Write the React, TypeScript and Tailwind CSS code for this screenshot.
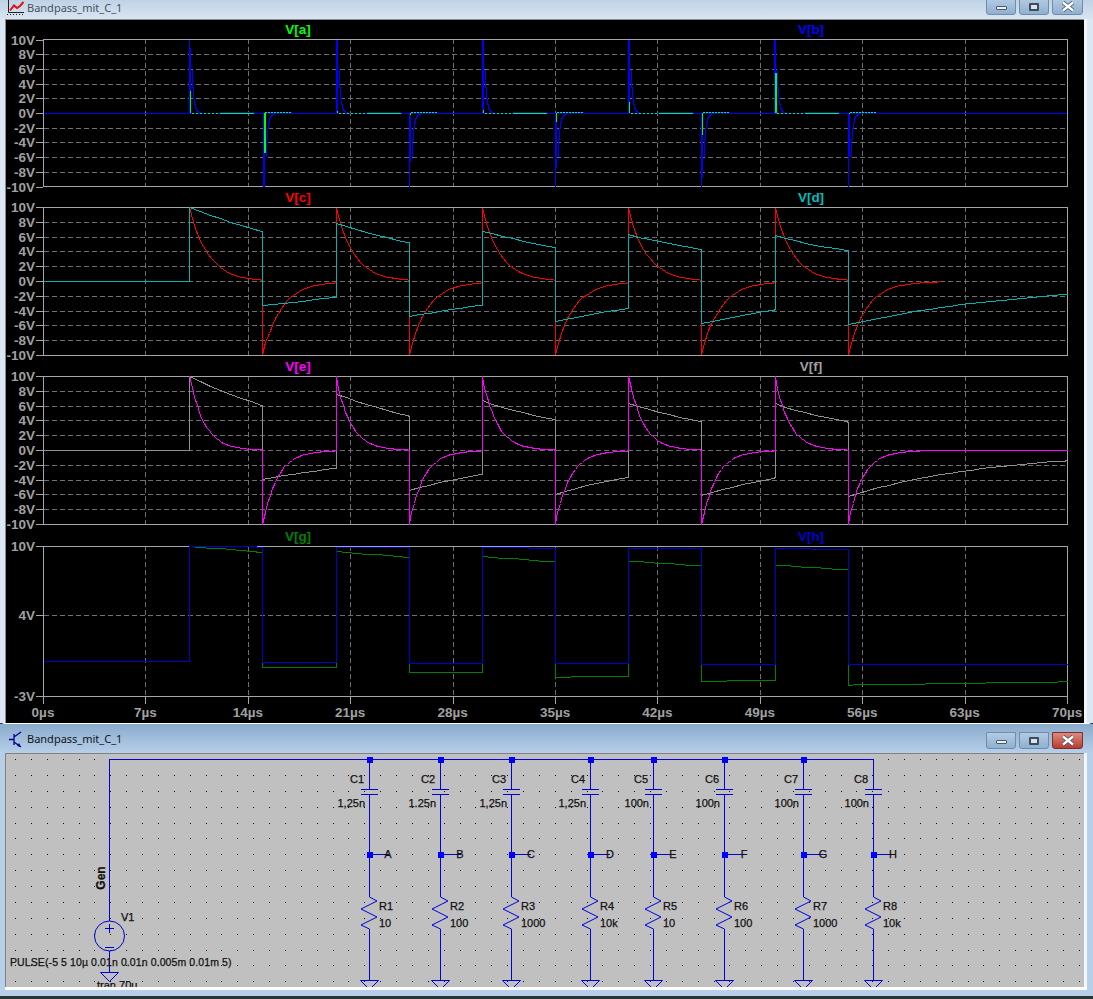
import type { ReactNode } from "react";

const EDGES = [10, 15, 20, 25, 30, 35, 40, 45, 50, 55];
const TICKS_X = [0, 7, 14, 21, 28, 35, 42, 49, 56, 63, 70];
const tx = (t: number) => 43 + t * 14.63;

// RC high pass answer to the pulse train, as pixel rounded points
function wave(tau: number, yOf: (v: number) => number, end = 70, lead = true) {
  const pts: string[] = [];
  const add = (t: number, v: number) => pts.push(`${Math.round(tx(t)) + 0.5},${Math.round(yOf(v)) + 0.5}`);
  if (lead) {
    add(0, 0);
    add(10, 0);
  }
  let v = 0;
  EDGES.forEach((e, i) => {
    v += i % 2 === 0 ? 10 : -10;
    const next = Math.min(i < 9 ? EDGES[i + 1] : 70, end);
    const dt = Math.max(0.14, Math.min(tau / 6, 0.7));
    let t = e;
    add(e, v);
    while (t < next) {
      t = Math.min(t + dt, next);
      add(t, v * Math.exp(-(t - e) / tau));
    }
    v = v * Math.exp(-(next - e) / tau);
  });
  return pts.join(" ");
}

function Trace({ points, color }: { points: string; color: string }) {
  return <polyline points={points} fill="none" stroke={color} strokeWidth={1} shapeRendering="crispEdges" />;
}

type PaneProps = {
  top: number;
  bottom: number;
  viewTop: number;
  viewBottom: number;
  yTicks: { label: string; y: number; grid: boolean }[];
  left: { label: string; color: string };
  right: { label: string; color: string };
  xAxis?: boolean;
  children: ReactNode;
};

function Pane({ top, bottom, viewTop, viewBottom, yTicks, left, right, xAxis, children }: PaneProps) {
  return (
    <svg
      width={1078}
      height={viewBottom - viewTop}
      viewBox={`6 ${viewTop} 1078 ${viewBottom - viewTop}`}
      className="block overflow-visible font-['Liberation_Sans'] font-bold text-[13.5px]"
    >
      <text x={298} y={top - 5} textAnchor="middle" fill={left.color}>{left.label}</text>
      <text x={811} y={top - 5} textAnchor="middle" fill={right.color}>{right.label}</text>
      {TICKS_X.slice(1, -1).map((t) => (
        <line key={t} x1={Math.round(tx(t)) + 0.5} x2={Math.round(tx(t)) + 0.5} y1={top} y2={bottom} stroke="#6e6e6e" strokeDasharray="5 3" shapeRendering="crispEdges" />
      ))}
      {yTicks.map((k) => (
        <g key={k.label}>
          {k.grid && <line x1={44} x2={1067} y1={k.y + 0.5} y2={k.y + 0.5} stroke="#6e6e6e" strokeDasharray="5 3" shapeRendering="crispEdges" />}
          <line x1={36} x2={43} y1={k.y + 0.5} y2={k.y + 0.5} stroke="#a6a6a6" shapeRendering="crispEdges" />
          <text x={35} y={k.y + 5} textAnchor="end" fill="#a0a0a0">{k.label}</text>
        </g>
      ))}
      <rect x={43.5} y={top + 0.5} width={1024} height={bottom - top} fill="none" stroke="#a6a6a6" shapeRendering="crispEdges" />
      {children}
      {xAxis &&
        TICKS_X.map((t) => (
          <g key={t}>
            <line x1={Math.round(tx(t)) + 0.5} x2={Math.round(tx(t)) + 0.5} y1={bottom} y2={bottom + 8} stroke="#a6a6a6" shapeRendering="crispEdges" />
            <text x={tx(t)} y={bottom + 21} textAnchor="middle" fill="#a0a0a0">{t}µs</text>
          </g>
        ))}
    </svg>
  );
}

function voltTicks(center: number, scale: number) {
  return [10, 8, 6, 4, 2, 0, -2, -4, -6, -8, -10].map((v) => ({
    label: `${v}V`,
    y: Math.round(center - v * scale),
    grid: v !== 10 && v !== -10,
  }));
}

// spikes of V[a] and V[b]: edge x, sign, end of the thick blue part, height of green part
const SPIKES = [
  { x: 189, s: 1, thick: 8.8, green: 3 },
  { x: 263, s: -1, thick: 10, green: 5.4 },
  { x: 336, s: 1, thick: 10, green: 0.3 },
  { x: 409, s: -1, thick: 6.7, green: 0.3 },
  { x: 482, s: 1, thick: 10, green: 0.4 },
  { x: 555, s: -1, thick: 7.5, green: 1.2 },
  { x: 628, s: 1, thick: 10, green: 1.5 },
  { x: 701, s: -1, thick: 8.8, green: 3 },
  { x: 774, s: 1, thick: 10, green: 5.5 },
  { x: 848, s: -1, thick: 6, green: 0.2 },
];

function Spikes() {
  const y = (v: number) => 113 - v * 7.35;
  return (
    <g shapeRendering="crispEdges">
      <line x1={44} x2={1067} y1={113.5} y2={113.5} stroke="#0000ff" />
      {SPIKES.map((p) => {
        const decay: string[] = [];
        for (let d = 1; d <= 11; d++) {
          const v = 10 * Math.exp(-d / 1.9);
          decay.push(`${p.x + d + 1.5},${Math.round(y(p.s * v)) + 0.5}`, `${p.x + d + 2.5},${Math.round(y(p.s * v)) + 0.5}`);
        }
        return (
          <g key={p.x}>
            <line x1={p.x + 0.5} x2={p.x + 0.5} y1={113} y2={y(p.s * 10)} stroke="#0000ff" />
            <rect x={p.x} y={Math.min(113, y(p.s * p.thick))} width={2} height={Math.abs(p.thick * 7.35)} fill="#0000ff" />
            <polyline points={decay.join(" ")} fill="none" stroke="#0000ff" />
            {p.s > 0 ? (
              <>
                <line x1={p.x + 3} x2={p.x + 30} y1={113.5} y2={113.5} stroke="#00ff00" strokeDasharray="2 2" />
                <line x1={p.x + 31} x2={p.x + 65} y1={112.5} y2={112.5} stroke="#0000ff" />
                <line x1={p.x + 31} x2={p.x + 65} y1={113.5} y2={113.5} stroke="#00ff00" />
              </>
            ) : (
              <line x1={p.x + 2} x2={p.x + 28} y1={112.5} y2={112.5} stroke="#00ff00" strokeDasharray="2 1" />
            )}
            <rect x={p.x + 1} y={Math.min(113, y(p.s * p.green))} width={p.green >= 5 ? 2 : 1} height={Math.abs(p.green * 7.35)} fill="#00ff00" />
          </g>
        );
      })}
    </g>
  );
}

function WinButtons({ active }: { active: boolean }) {
  return (
    <div className="flex gap-[3px] items-start">
      <div className="w-[30px] h-[17px] rounded-b-[3px] border border-[#6f8cab] bg-gradient-to-b from-[#b3cbe3] to-[#8fb0d0] flex items-center justify-center">
        <div className="w-[11px] h-[4px] mt-[3px] bg-[#e8eef5] border border-[#4c5a68] rounded-[1px]" />
      </div>
      <div className="w-[30px] h-[17px] rounded-b-[3px] border border-[#6f8cab] bg-gradient-to-b from-[#b3cbe3] to-[#8fb0d0] flex items-center justify-center">
        <div className="w-[10px] h-[8px] border-2 border-[#3e4c5a] rounded-[1px] bg-[#d7e2ec]" />
      </div>
      <div
        className={
          active
            ? "w-[31px] h-[17px] rounded-b-[3px] border border-[#7a2e2e] bg-gradient-to-b from-[#d98a7c] to-[#b83a2e] flex items-center justify-center"
            : "w-[31px] h-[17px] rounded-b-[3px] border border-[#6f8cab] bg-gradient-to-b from-[#b3cbe3] to-[#8fb0d0] flex items-center justify-center"
        }
      >
        <svg width="14" height="11" viewBox="0 0 14 11">
          <path d="M2 1.5 12 9.5M12 1.5 2 9.5" stroke="#3f4f5f" strokeWidth="4" />
          <path d="M2 1.5 12 9.5M12 1.5 2 9.5" stroke="#fff" strokeWidth="2.4" />
        </svg>
      </div>
    </div>
  );
}

function PlotIcon() {
  return (
    <svg width="17" height="15" viewBox="0 0 17 15" className="shrink-0">
      <path d="M1.5 0v12.5H17" stroke="#222" fill="none" />
      <path d="M0 14.5h1M3 14.5h1M6 14.5h1M9 14.5h1M12 14.5h1M15 14.5h1" stroke="#222" />
      <path d="M3 10.5 7 5.5l3 2.5 3-2 3.5-4" stroke="#e01010" strokeWidth="2" fill="none" />
    </svg>
  );
}

function SchematicIcon() {
  return (
    <svg width="14" height="17" viewBox="0 0 14 17" className="shrink-0">
      <path d="M0 8.5h5M5 3v11M5 6l7-5M5 11l7 5" stroke="#00008c" strokeWidth="1.3" fill="none" />
      <path d="M12 16l-4-1 2-3z" fill="#00008c" />
    </svg>
  );
}

const WIRE = "#0000e0";
const COLUMNS = [
  { x: 369, c: "C1", cv: "1,25n", r: "R1", rv: "10", n: "A" },
  { x: 440, c: "C2", cv: "1.25n", r: "R2", rv: "100", n: "B" },
  { x: 511, c: "C3", cv: "1,25n", r: "R3", rv: "1000", n: "C" },
  { x: 590, c: "C4", cv: "1,25n", r: "R4", rv: "10k", n: "D" },
  { x: 653, c: "C5", cv: "100n", r: "R5", rv: "10", n: "E" },
  { x: 724, c: "C6", cv: "100n", r: "R6", rv: "100", n: "F" },
  { x: 803, c: "C7", cv: "100n", r: "R7", rv: "1000", n: "G" },
  { x: 873, c: "C8", cv: "100n", r: "R8", rv: "10k", n: "H" },
];

function Schematic() {
  const dots: { x: number; y: number }[] = [];
  for (let i = 0; i < 68; i++) {
    for (let j = 0; j < 15; j++) dots.push({ x: Math.round(15 + i * 15.875), y: Math.round(759 + j * 15.875) });
  }
  return (
    <svg width={1078} height={233} viewBox="6 754 1078 233" className="block font-['Liberation_Sans'] text-[11px] bg-[#c0c0c0]">
      {dots.map((d) => (
        <rect key={`${d.x}-${d.y}`} x={d.x} y={d.y} width={1} height={1} fill="#111" />
      ))}
      <path d="M109.5 921V759.5H873.5" stroke={WIRE} fill="none" shapeRendering="crispEdges" />
      <path d="M109.5 951V972" stroke={WIRE} shapeRendering="crispEdges" />
      <circle cx={109.5} cy={936} r={15} fill="none" stroke="#0000c8" />
      <path d="M105 928.5h9M109.5 924v9M105 947.5h9" stroke="#0000c8" fill="none" shapeRendering="crispEdges" />
      <path d="M100.5 972.5h18L109.5 981.5z" fill="none" stroke={WIRE} />
      <g fill="#111" stroke="#111" strokeWidth={0.25}>
        <text transform="translate(105 878) rotate(-90)" textAnchor="middle" className="font-bold text-[12px]">Gen</text>
        <text x={121} y={921}>V1</text>
        <text x={10} y={966} className="text-[10.5px] tracking-[0.1px]">PULSE(-5 5 10µ 0.01n 0.01n 0.005m 0.01m 5)</text>
        <text x={97} y={989}>tran 70µ</text>
      </g>
      {COLUMNS.map((c, i) => (
        <g key={c.c}>
          {i < 7 && <rect x={c.x - 2} y={757} width={6} height={6} fill="#0000ff" />}
          <path
            d={`M${c.x + 0.5} 759V789M${c.x + 0.5} 794V897M${c.x + 0.5} 929V980M${c.x - 8} 789.5h17M${c.x - 8} 794.5h17M${c.x + 0.5} 854.5h19`}
            stroke={WIRE}
            fill="none"
            shapeRendering="crispEdges"
          />
          <rect x={c.x - 2} y={852} width={6} height={6} fill="#0000ff" />
          <polyline
            points={`${c.x + 0.5},897 ${c.x + 8},901 ${c.x - 8},909 ${c.x + 8},917 ${c.x - 8},925 ${c.x + 0.5},929`}
            fill="none"
            stroke={WIRE}
          />
          <path d={`M${c.x - 8.5} 980.5h18L${c.x + 0.5} 989.5z`} fill="none" stroke={WIRE} />
          <g fill="#111" stroke="#111" strokeWidth={0.25}>
            <text x={c.x - 5} y={783} textAnchor="end">{c.c}</text>
            <text x={c.x - 4} y={807} textAnchor="end">{c.cv}</text>
            <text x={c.x + 19} y={858} textAnchor="middle" dx={c.n === "A" ? 0 : 1}>{c.n}</text>
            <text x={c.x + 10} y={910}>{c.r}</text>
            <text x={c.x + 10} y={927}>{c.rv}</text>
          </g>
        </g>
      ))}
    </svg>
  );
}

export default function App() {
  const y2 = (v: number) => 281 - v * 7.4;
  const y3 = (v: number) => 450 - v * 7.4;
  const y4 = (v: number) => 546 + ((10 - v) / 13) * 150;

  return (
    <div className="w-[1093px] h-[999px] overflow-hidden bg-[#2c3338] font-['Noto_Sans',sans-serif]">
      {/* plot window */}
      <div className="h-[723px] flex flex-col bg-[#dbe8f4]">
        <div className="h-[19px] flex items-start justify-between pl-[7px] pr-[10px] bg-gradient-to-b from-[#bfd2e5] to-[#d8e5f2]">
          <div className="flex items-center gap-[3px] h-[15px]">
            <PlotIcon />
            <span className="text-[11px] leading-[15px] text-[#47525e]">Bandpass_mit_C_1</span>
          </div>
          <div className="-mt-[2px]">
            <WinButtons active={false} />
          </div>
        </div>
        <div className="flex flex-1">
          <div className="w-[5px]" />
          <div className="w-[1079px] border-l border-t border-[#8c8c8c] bg-black">
            <Pane top={39} bottom={186} viewTop={20} viewBottom={192} yTicks={voltTicks(113, 7.35)} left={{ label: "V[a]", color: "#00ff00" }} right={{ label: "V[b]", color: "#0000ff" }}>
              <Spikes />
            </Pane>
            <Pane top={207} bottom={355} viewTop={192} viewBottom={361} yTicks={voltTicks(281, 7.4)} left={{ label: "V[c]", color: "#ff0000" }} right={{ label: "V[d]", color: "#00bcbc" }}>
              <Trace points={wave(1.25, y2, 61.3)} color="#ff0000" />
              <Trace points={wave(12.5, y2)} color="#00b4b4" />
            </Pane>
            <Pane top={376} bottom={524} viewTop={361} viewBottom={530} yTicks={voltTicks(450, 7.4)} left={{ label: "V[e]", color: "#ff00ff" }} right={{ label: "V[f]", color: "#a0a0a0" }}>
              <Trace points={wave(10, y3)} color="#909090" />
              <Trace points={wave(1, y3, 70, false)} color="#ff00ff" />
            </Pane>
            <Pane
              top={546}
              bottom={696}
              viewTop={530}
              viewBottom={722}
              xAxis
              yTicks={[
                { label: "10V", y: 546, grid: false },
                { label: "4V", y: 615, grid: true },
                { label: "-3V", y: 696, grid: false },
              ]}
              left={{ label: "V[g]", color: "#008000" }}
              right={{ label: "V[h]", color: "#0000d0" }}
            >
              <Trace points={wave(100, y4)} color="#008000" />
              <Trace points={wave(1000, y4)} color="#0000d0" />
            </Pane>
          </div>
          <div className="w-[3px] bg-[#f1f6fb]" />
          <div className="w-[6px]" />
        </div>
      </div>

      {/* schematic window */}
      <div className="h-[273px] flex flex-col rounded-t-[5px] border-t border-white bg-[#b7cfe9]">
        <div className="h-[29px] flex items-start justify-between pl-[9px] pr-[10px] bg-gradient-to-b from-[#8aabcc] to-[#b7cfe9]">
          <div className="flex items-center gap-[4px] h-[29px] pt-[1px]">
            <SchematicIcon />
            <span className="text-[11px] text-[#10141a]">Bandpass_mit_C_1</span>
          </div>
          <div className="mt-[8px]">
            <WinButtons active />
          </div>
        </div>
        <div className="flex h-[234px]">
          <div className="w-[5px]" />
          <div className="w-[1079px] border-l border-t border-[#808080]">
            <Schematic />
          </div>
          <div className="w-[3px] bg-[#f1f6fb]" />
        </div>
        <div className="h-[3px] mx-[5px] mr-[6px] bg-white" />
      </div>
    </div>
  );
}
